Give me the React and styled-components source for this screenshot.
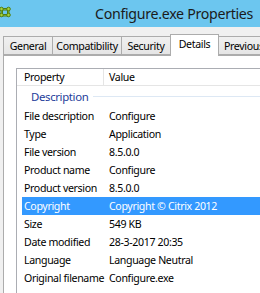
import React from 'react';
import styled, { createGlobalStyle } from 'styled-components';

const Global = createGlobalStyle`
  html, body { margin: 0; padding: 0; background: #f0f0f0; }
  body {
    width: 260px; height: 293px; overflow: hidden;
    font-family: "Noto Sans", "Open Sans", sans-serif;
    color: #000;
  }
`;

const Window = styled.div`
  width: 260px; height: 293px;
  display: flex; flex-direction: column;
  overflow: hidden; background: #f0f0f0;
`;

const TitleBar = styled.div`
  height: 27px; flex: none;
  background: #6cc6ef;
  display: flex; align-items: center;
`;

const Title = styled.div`
  margin-left: 84px;
  font-size: 14.2px;
  letter-spacing: -0.3px;
  color: #1b1b1b;
  white-space: nowrap;
`;

const Body = styled.div`
  flex: 1; display: flex; flex-direction: column;
  padding-left: 3px;
`;

const TabStrip = styled.div`
  height: 28px; flex: none;
  display: flex; align-items: flex-end;
  position: relative; z-index: 1;
`;

const Tab = styled.div`
  box-sizing: border-box;
  width: ${p => p.$w}px;
  flex: none;
  height: ${p => (p.$active ? 22 : 19)}px;
  margin-bottom: ${p => (p.$active ? -1 : 0)}px;
  border: 1px solid #acacac;
  border-bottom: ${p => (p.$active ? 'none' : '1px solid #acacac')};
  margin-left: ${p => (p.$first ? 0 : -1)}px;
  background: ${p => (p.$active ? '#fff' : 'linear-gradient(#f0f0f0, #e5e5e5)')};
  font-size: 10.6px;
  letter-spacing: -0.35px;
  display: flex; align-items: center;
  justify-content: ${p => (p.$last ? 'flex-start' : 'center')};
  padding-left: ${p => (p.$last ? 5 : 0)}px;
  padding-bottom: ${p => (p.$active ? 3 : 0)}px;
  white-space: nowrap; overflow: hidden;
`;

const Panel = styled.div`
  flex: 1;
  background: #fff;
  border-top: 1px solid #acacac;
  border-left: 1px solid #acacac;
  padding: 12px 0 0 12px;
  display: flex;
`;

const ListBox = styled.div`
  flex: 1;
  border-top: 1px solid #abadb3;
  border-left: 1px solid #abadb3;
  display: flex; flex-direction: column;
  font-size: 10.6px;
  letter-spacing: -0.35px;
`;

const Header = styled.div`
  height: 16px;
  border-bottom: 1px solid #e5e5e5;
  display: flex;
`;

const HeadCell = styled.div`
  box-sizing: border-box;
  width: ${p => (p.$w ? `${p.$w}px` : 'auto')};
  flex: ${p => (p.$w ? 'none' : '1')};
  padding-left: ${p => p.$pad}px;
  border-right: ${p => (p.$w ? '1px solid #e5e5e5' : 'none')};
  display: flex; align-items: center;
  white-space: nowrap;
`;

const GroupRow = styled.div`
  height: 21px;
  display: flex; align-items: center;
  padding-left: 14px;
  gap: 5px;
  color: #1e3c9a;
  font-size: 11.4px;
`;

const GroupLine = styled.div`
  flex: 1;
  height: 1px;
  background: #dde8f4;
  margin-top: -1px;
`;

const Row = styled.div`
  height: 18px;
  margin-left: 5px;
  display: flex; align-items: center;
  background: ${p => (p.$selected ? '#3399ff' : 'transparent')};
  color: ${p => (p.$selected ? '#fff' : '#000')};
  white-space: nowrap;
`;

const NameCell = styled.div`
  width: 81px; flex: none;
  box-sizing: border-box;
  padding-left: 2px;
`;

const ValueCell = styled.div`
  flex: 1;
  padding-left: 6px;
`;

const AppIcon = () => (
  <svg width="11" height="12" viewBox="0 0 11 12" style={{ flex: 'none', marginTop: '-4px' }}>
    <g stroke="#4f7d14" strokeWidth="1" fill="#a6d23a">
      <rect x="2" y="2.5" width="6" height="1.5" />
      <rect x="2" y="8.5" width="6" height="1.5" />
      <rect x="1" y="3" width="1.5" height="6" />
      <rect x="7.5" y="3" width="1.5" height="6" />
      <circle cx="1.5" cy="3" r="1.8" />
      <circle cx="8.5" cy="3" r="1.8" />
      <circle cx="1.5" cy="9" r="1.8" />
      <circle cx="8.5" cy="9" r="1.8" />
    </g>
  </svg>
);

const tabs = [
  { label: 'General', w: 50 },
  { label: 'Compatibility', w: 70 },
  { label: 'Security', w: 50 },
  { label: 'Details', w: 49, active: true },
  { label: 'Previous Versions', w: 100, last: true },
];

const rows = [
  ['File description', 'Configure'],
  ['Type', 'Application'],
  ['File version', '8.5.0.0'],
  ['Product name', 'Configure'],
  ['Product version', '8.5.0.0'],
  ['Copyright', 'Copyright \u00A9 Citrix 2012', true],
  ['Size', '549 KB'],
  ['Date modified', '28-3-2017 20:35'],
  ['Language', 'Language Neutral'],
  ['Original filename', 'Configure.exe'],
];

export default function App() {
  return (
    <Window>
      <Global />
      <TitleBar>
        <AppIcon />
        <Title>Configure.exe Properties</Title>
      </TitleBar>
      <Body>
        <TabStrip>
          {tabs.map((t, i) => (
            <Tab key={t.label} $w={t.w} $active={t.active} $first={i === 0} $last={t.last}>
              {t.label}
            </Tab>
          ))}
        </TabStrip>
        <Panel>
          <ListBox>
            <Header>
              <HeadCell $w={87} $pad={7}>Property</HeadCell>
              <HeadCell $pad={5}>Value</HeadCell>
            </Header>
            <GroupRow>
              <span>Description</span>
              <GroupLine />
            </GroupRow>
            {rows.map(([k, v, sel]) => (
              <Row key={k} $selected={sel}>
                <NameCell>{k}</NameCell>
                <ValueCell>{v}</ValueCell>
              </Row>
            ))}
          </ListBox>
        </Panel>
      </Body>
    </Window>
  );
}
